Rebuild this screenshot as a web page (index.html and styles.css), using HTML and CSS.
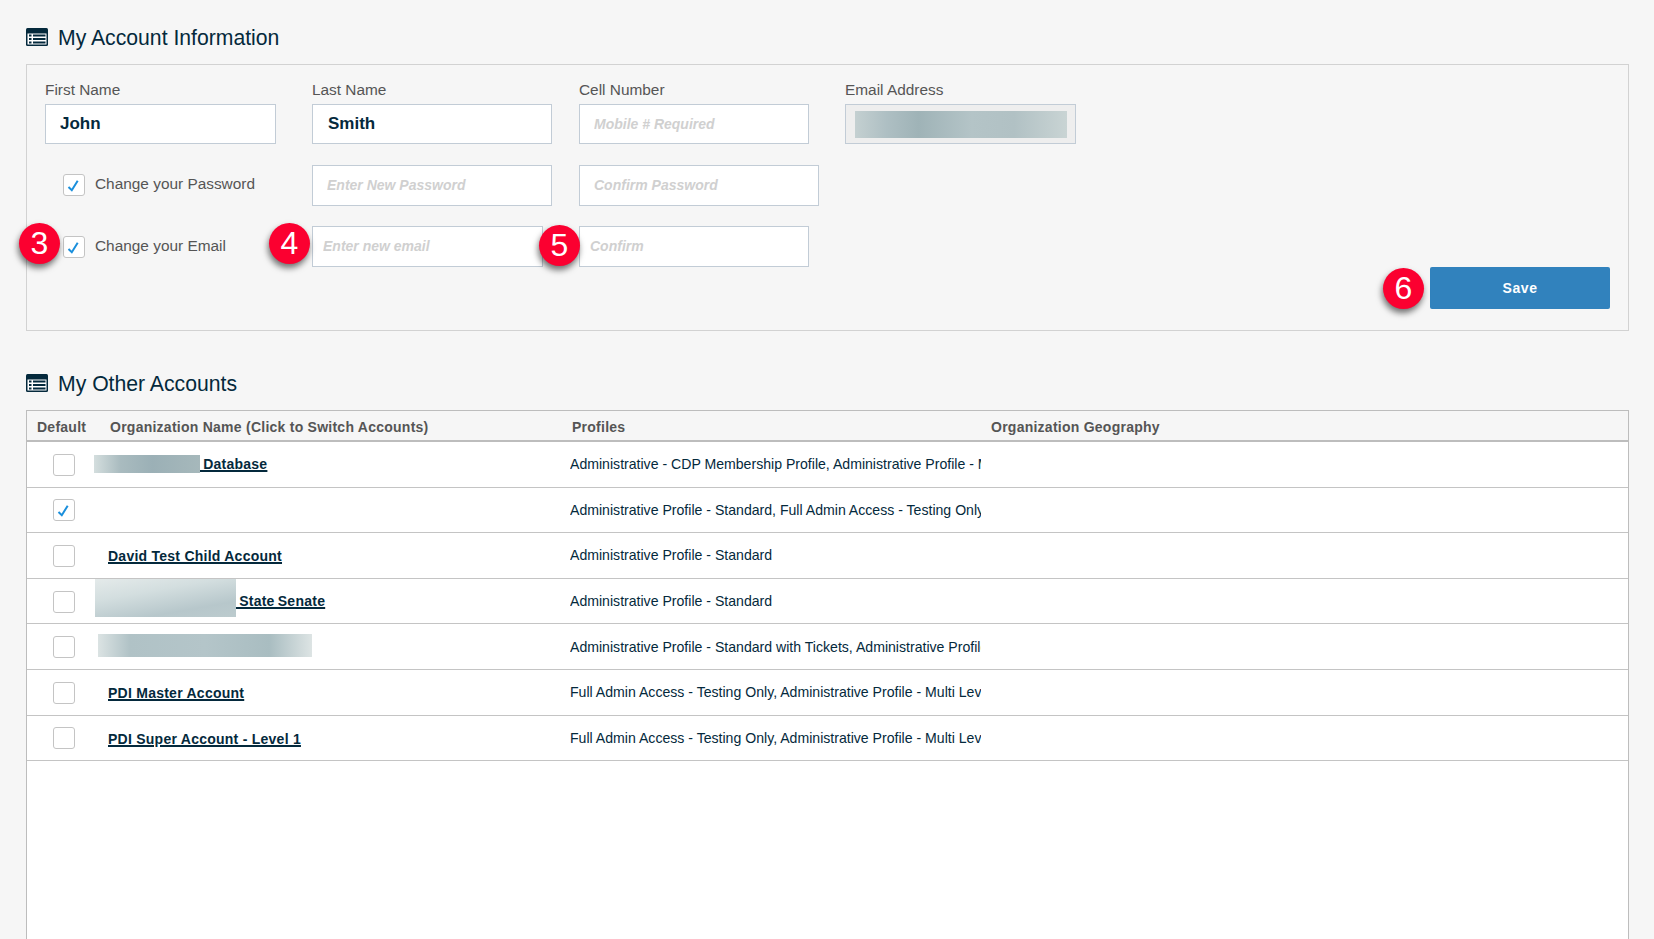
FILE: index.html
```html
<!DOCTYPE html>
<html lang="en">
<head>
  <meta charset="UTF-8" />
  <title>My Account</title>
  <link rel="stylesheet" href="styles.css">
</head>
<body>

<h2 class="title">
  <svg class="title-icon" viewBox="0 0 22 18"><rect width="22" height="18" rx="1.5" fill="#04293c"/><rect x="1.5" y="5.5" width="19" height="11" fill="#fff"/><path d="M3 7.6h2.5M7 7.6h12.5M3 11h2.5M7 11h12.5M3 14.4h2.5M7 14.4h12.5" stroke="#04293c" stroke-width="2"/></svg>
  My Account Information
</h2>

<div class="panel">
  <div class="form-grid">
    <div class="top-field">
      <label class="field-label">First Name</label>
      <input class="field field-first field-filled" type="text" value="John" />
    </div>
    <div class="top-field">
      <label class="field-label">Last Name</label>
      <input class="field field-wide field-filled field-last" type="text" value="Smith" />
    </div>
    <div class="top-field">
      <label class="field-label">Cell Number</label>
      <input class="field field-cell" type="text" placeholder="Mobile # Required" />
    </div>
    <div class="top-field">
      <label class="field-label">Email Address</label>
      <div class="field field-first field-locked"><div class="smear smear-email"></div></div>
    </div>

    <div class="check-row">
      <span class="check"><svg viewBox="0 0 20 20"><path d="M4.5 12l3.3 3.2 5.9-9.5" fill="none" stroke="#1a8fdc" stroke-width="2"/></svg></span>
      <span class="check-text">Change your Password</span>
    </div>
    <input class="field field-wide field-tall" type="text" placeholder="Enter New Password" />
    <input class="field field-wide field-tall" type="text" placeholder="Confirm Password" />
    <div></div>

    <div class="check-row check-row-email">
      <span class="check"><svg viewBox="0 0 20 20"><path d="M4.5 12l3.3 3.2 5.9-9.5" fill="none" stroke="#1a8fdc" stroke-width="2"/></svg></span>
      <span class="check-text">Change your Email</span>
    </div>
    <input class="field field-first field-tall field-tight" type="text" placeholder="Enter new email" />
    <input class="field field-cell field-tall field-tight" type="text" placeholder="Confirm" />
  </div>

  <div class="actions">
    <button class="btn">Save</button>
  </div>

  <span class="badge badge-3">3</span>
  <span class="badge badge-4">4</span>
  <span class="badge badge-5">5</span>
  <span class="badge badge-6">6</span>
</div>

<h2 class="title title-second">
  <svg class="title-icon" viewBox="0 0 22 18"><rect width="22" height="18" rx="1.5" fill="#04293c"/><rect x="1.5" y="5.5" width="19" height="11" fill="#fff"/><path d="M3 7.6h2.5M7 7.6h12.5M3 11h2.5M7 11h12.5M3 14.4h2.5M7 14.4h12.5" stroke="#04293c" stroke-width="2"/></svg>
  My Other Accounts
</h2>

<div class="accounts">
  <div class="row row-head">
    <div class="col-default">Default</div>
    <div class="col-name">Organization Name (Click to Switch Accounts)</div>
    <div class="col-profiles">Profiles</div>
    <div>Organization Geography</div>
  </div>

  <div class="row">
    <div class="col-default"><span class="check"></span></div>
    <div class="col-name cell-name name-flush"><a href="#"><span class="smear smear-db"></span> Database</a></div>
    <div class="col-profiles cell-profile">Administrative - CDP Membership Profile, Administrative Profile - Multi Level</div>
  </div>
  <div class="row">
    <div class="col-default"><span class="check"><svg viewBox="0 0 20 20"><path d="M4.5 12l3.3 3.2 5.9-9.5" fill="none" stroke="#1a8fdc" stroke-width="2"/></svg></span></div>
    <div class="col-name cell-name"></div>
    <div class="col-profiles cell-profile">Administrative Profile - Standard, Full Admin Access - Testing Only</div>
  </div>
  <div class="row">
    <div class="col-default"><span class="check"></span></div>
    <div class="col-name cell-name"><a href="#">David Test Child Account</a></div>
    <div class="col-profiles cell-profile">Administrative Profile - Standard</div>
  </div>
  <div class="row">
    <div class="col-default"><span class="check"></span></div>
    <div class="col-name cell-name name-flush"><a href="#"><span class="smear smear-senate"></span> State Senate</a></div>
    <div class="col-profiles cell-profile">Administrative Profile - Standard</div>
  </div>
  <div class="row">
    <div class="col-default"><span class="check"></span></div>
    <div class="col-name cell-name name-flush"><span class="smear smear-long"></span></div>
    <div class="col-profiles cell-profile">Administrative Profile - Standard with Tickets, Administrative Profile</div>
  </div>
  <div class="row">
    <div class="col-default"><span class="check"></span></div>
    <div class="col-name cell-name"><a href="#">PDI Master Account</a></div>
    <div class="col-profiles cell-profile">Full Admin Access - Testing Only, Administrative Profile - Multi Level</div>
  </div>
  <div class="row">
    <div class="col-default"><span class="check"></span></div>
    <div class="col-name cell-name"><a href="#">PDI Super Account - Level 1</a></div>
    <div class="col-profiles cell-profile">Full Admin Access - Testing Only, Administrative Profile - Multi Level</div>
  </div>
</div>

</body>
</html>
```

FILE: styles.css
```css
html, body {
  height: 100%;
}

body {
  font-family: "Liberation Sans", Arial, sans-serif;
  background: #f6f6f6;
  color: #04293c;
  margin: 0;
  padding: 26px 25px 0 26px;
  box-sizing: border-box;
  display: flex;
  flex-direction: column;
  overflow: hidden;
}

.title {
  display: flex;
  align-items: center;
  gap: 10px;
  height: 24px;
  margin: 0;
  font-size: 21.2px;
  font-weight: 400;
  color: #04293c;
}

.title-icon {
  width: 22px;
  height: 18px;
  margin-top: -3px;
}

.title-second {
  margin-top: 41px;
}

.panel {
  position: relative;
  margin-top: 14px;
  height: 267px;
  box-sizing: border-box;
  border: 1px solid #d2d2d2;
  padding: 16px 18px 0;
  flex-shrink: 0;
}

.form-grid {
  display: grid;
  grid-template-columns: 267px 267px 266px 231px;
  row-gap: 20px;
  align-items: start;
}

.top-field {
  margin-bottom: 1px;
}

.field-label {
  display: block;
  font-size: 15.4px;
  line-height: 18px;
  margin-bottom: 5px;
  color: #555;
}

.field {
  display: block;
  box-sizing: border-box;
  height: 40px;
  padding: 0 14px;
  border: 1px solid #c2ccd6;
  background: #fff;
  font-family: "Liberation Sans", Arial, sans-serif;
  font-size: 14px;
  font-weight: 700;
  font-style: italic;
  border-radius: 0;
  outline: none;
}

.field::placeholder {
  color: #d0d0d0;
  opacity: 1;
}

.field-filled {
  font-size: 17px;
  font-style: normal;
  color: #04293c;
}

.field-last {
  padding: 0 15px;
}

.field-tall {
  height: 41px;
  padding-bottom: 2px;
}

.field-tight {
  padding-left: 10px;
  padding-right: 10px;
}

.field-first {
  width: 231px;
}

.field-cell {
  width: 230px;
}

.field-wide {
  width: 240px;
}

.field-locked {
  background: #eee;
  padding: 6px 8px 6px 9px;
}

.check-row {
  display: flex;
  align-items: center;
  gap: 10px;
  padding: 9px 0 0 18px;
  font-size: 15.4px;
  color: #555;
}

.check-row-email {
  padding-top: 10px;
}

.check-text {
  margin-bottom: 3px;
}

.check {
  display: inline-block;
  width: 22px;
  height: 22px;
  box-sizing: border-box;
  border: 1px solid #c4c4c4;
  border-radius: 3px;
  background: #fff;
  flex-shrink: 0;
}

.check svg {
  display: block;
  width: 20px;
  height: 20px;
}

.actions {
  display: flex;
  justify-content: flex-end;
}

.btn {
  width: 180px;
  height: 42px;
  border: none;
  border-radius: 2px;
  background: #3182bd;
  color: white;
  font-family: "Liberation Sans", Arial, sans-serif;
  font-size: 14px;
  font-weight: 700;
  letter-spacing: 0.6px;
  cursor: pointer;
}

.badge {
  position: absolute;
  width: 41px;
  height: 41px;
  border-radius: 50%;
  background: #fb0030;
  color: white;
  font-size: 32px;
  line-height: 41px;
  text-align: center;
  box-shadow: -1px 4px 6px rgba(0, 0, 0, 0.55);
}

.badge-3 { left: -8px; top: 158px; }
.badge-4 { left: 242px; top: 158px; }
.badge-5 { left: 512px; top: 160px; }
.badge-6 { left: 1356px; top: 203px; }

.smear {
  display: block;
  height: 27px;
  background: linear-gradient(90deg, #c4d0d1, #aebfc3 15%, #9fb3b7 30%, #b4c4c7 55%, #b1c1c4 75%, #c9d4d4);
}

.smear-db {
  display: inline-block;
  width: 106px;
  height: 18px;
  margin-left: -1px;
  vertical-align: middle;
  transform: translateY(-1px);
  background: linear-gradient(90deg, #d4dede, #a9bbbf 25%, #9bb0b6 55%, #a6b8bb);
}

.smear-senate {
  display: inline-block;
  width: 141px;
  height: 38px;
  vertical-align: middle;
  transform: translateY(-4px);
  background: linear-gradient(170deg, #e4eaea, #d3dedf 35%, #b7c7cb 75%, #bccbce);
}

.smear-long {
  width: 214px;
  height: 23px;
  margin-left: 3px;
  transform: translateY(-2px);
  background: linear-gradient(90deg, #dbe3e3, #b0c2c6 15%, #b4c5c9 50%, #a9bdc1 80%, #dde4e4);
}

.accounts {
  flex: 1;
  margin-top: 14px;
  background: #fff;
  border: 1px solid #bdbdbd;
  border-bottom: none;
}

.row {
  display: flex;
  align-items: center;
  height: 45.6px;
  box-sizing: border-box;
  border-bottom: 1px solid #c4c4c4;
  font-size: 14.1px;
}

.row-head {
  height: 31px;
  padding-top: 3px;
  background: #f6f6f6;
  border-bottom: 2px solid #bdbdbd;
  font-size: 14px;
  font-weight: 700;
  color: #555;
  letter-spacing: 0.25px;
}

.col-default {
  width: 83px;
  padding-left: 10px;
  box-sizing: border-box;
  flex-shrink: 0;
}

.row .col-default .check {
  display: block;
  margin: 1px 0 0 16px;
}

.col-name {
  width: 460px;
  flex-shrink: 0;
}

.col-profiles {
  width: 421px;
  flex-shrink: 0;
}

.row-head .col-profiles {
  padding-left: 2px;
  box-sizing: border-box;
}

.cell-profile {
  width: 411px;
  margin-right: 10px;
  white-space: nowrap;
  overflow: hidden;
}

.cell-name {
  font-size: 14px;
  font-weight: 700;
  letter-spacing: 0.25px;
  margin-left: -2px;
  padding-top: 2px;
  width: 462px;
}

.cell-name a {
  color: #04293c;
  text-decoration: underline;
  text-decoration-thickness: 2px;
}

.name-flush {
  margin-left: -15px;
  width: 475px;
  word-spacing: -1px;
}
```
